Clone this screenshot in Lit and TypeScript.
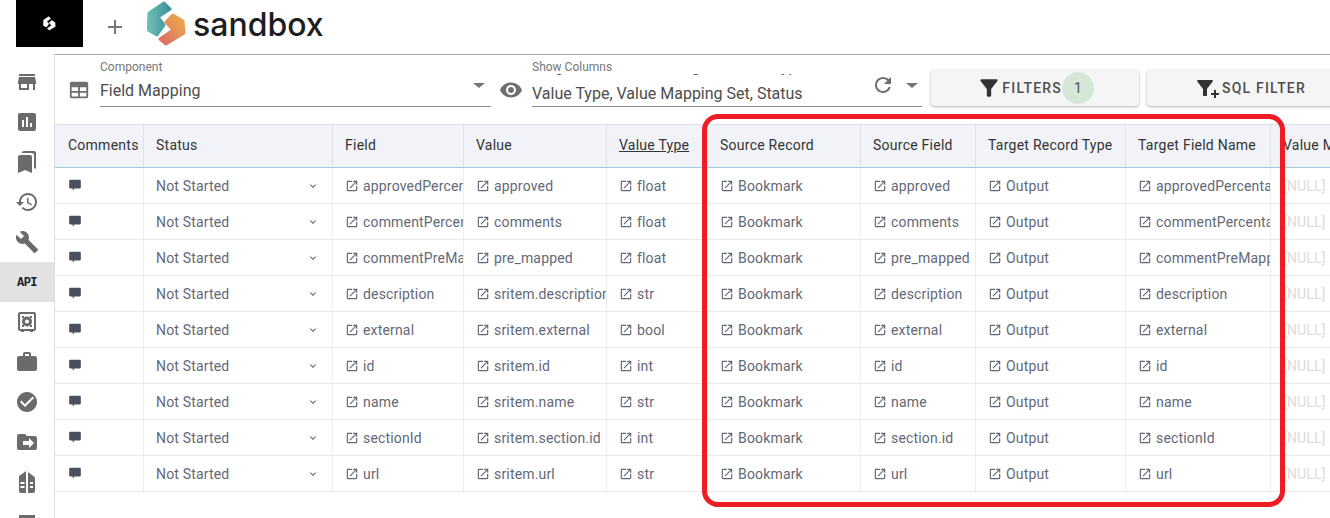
import { LitElement, html, css } from "lit";
import { customElement } from "lit/decorators.js";

const icon = (d: string, size = 24) =>
  html`<svg class="ic" width="${size}" height="${size}" viewBox="0 0 24 24" fill="currentColor"><path d="${d}"></path></svg>`;

const NAV = [
  "M20 4H4v2h16V4zm1 10v-2l-1-5H4l-1 5v2h1v6h10v-6h4v6h2v-6h1zm-9 4H6v-4h6v4z",
  "M19 3H5c-1.1 0-2 .9-2 2v14c0 1.1.9 2 2 2h14c1.1 0 2-.9 2-2V5c0-1.1-.9-2-2-2zM9 17H7v-7h2v7zm4 0h-2V7h2v10zm4 0h-2v-4h2v4z",
  "M19 18l2 1V3c0-1.1-.9-2-2-2H8.99C7.89 1 7 1.9 7 3h10c1.1 0 2 .9 2 2v13zM15 5H5c-1.1 0-2 .9-2 2v16l7-3 7 3V7c0-1.1-.9-2-2-2z",
  "M13 3c-4.97 0-9 4.03-9 9H1l3.89 3.89.07.14L9 12H6c0-3.87 3.13-7 7-7s7 3.13 7 7-3.13 7-7 7c-1.93 0-3.68-.79-4.94-2.06l-1.42 1.42C8.27 19.99 10.51 21 13 21c4.97 0 9-4.03 9-9s-4.03-9-9-9zm-1 5v5l4.28 2.54.72-1.21-3.5-2.08V8H12z",
  "M22.7 19l-9.1-9.1c.9-2.3.4-5-1.5-6.9-2-2-5-2.4-7.4-1.3L9 6 6 9 1.6 4.7C.4 7.1.9 10.1 2.9 12.1c1.9 1.9 4.6 2.4 6.9 1.5l9.1 9.1c.4.4 1 .4 1.4 0l2.3-2.3c.5-.4.5-1.1.1-1.4z",
  "API",
  "M5 2h14c1.1 0 2 .9 2 2v15c0 1.1-.9 2-2 2h-1v1h-3v-1H9v1H6v-1H5c-1.1 0-2-.9-2-2V4c0-1.1.9-2 2-2zm0 2v15h14V4H5zm7 2.5a5 5 0 1 1 0 10 5 5 0 0 1 0-10zm0 3a2 2 0 1 0 0 4 2 2 0 0 0 0-4zM7 6h2v2H7V6zm8 0h2v2h-2V6zM7 15h2v2H7v-2zm8 0h2v2h-2v-2z",
  "M20 6h-4V4c0-1.11-.89-2-2-2h-4c-1.11 0-2 .89-2 2v2H4c-1.11 0-1.99.89-1.99 2L2 19c0 1.11.89 2 2 2h16c1.11 0 2-.89 2-2V8c0-1.11-.89-2-2-2zm-6 0h-4V4h4v2z",
  "M12 2C6.48 2 2 6.48 2 12s4.48 10 10 10 10-4.48 10-10S17.52 2 12 2zm-2 15l-5-5 1.41-1.41L10 14.17l7.59-7.59L19 8l-9 9z",
  "M20 6h-8l-2-2H4c-1.11 0-1.99.89-1.99 2L2 18c0 1.11.89 2 2 2h16c1.11 0 2-.89 2-2V8c0-1.11-.89-2-2-2zm-6 12v-3H8v-4h6V8l5 5-5 5z",
  "M11 1v22H6c-1.1 0-2-.9-2-2V7c0-.8.5-1.500 1.200-1.800L11 1zM5.500 12v2h4v-2h-4zm0 4v2h4v-2h-4zM13 2l6 4.500c.6.4 1 1 1 1.700V21c0 1.100-.9 2-2 2h-5V2zm2 10v2h3v-2h-3zm0 4v2h3v-2h-3z",
  "M4 5h16v4H4z",
];

const LINK =
  "M19 19H5V5h7V3H5c-1.11 0-2 .9-2 2v14c0 1.1.89 2 2 2h14c1.1 0 2-.9 2-2v-7h-2v7zM14 3v2h3.59l-9.83 9.83 1.41 1.41L19 6.41V10h2V3h-7z";
const COMMENT =
  "M4 3h16c1.100 0 2 .9 2 2v11c0 1.100-.9 2-2 2h-9l-3 4v-4H4c-1.100 0-2-.9-2-2V5c0-1.100.9-2 2-2z";
const CHEVRON = "M16.590 8.590L12 13.170 7.410 8.590 6 10l6 6 6-6z";
const FUNNEL =
  "M4.25 5.61C6.27 8.2 10 13 10 13v6c0 .55.45 1 1 1h2c.55 0 1-.45 1-1v-6s3.72-4.8 5.74-7.39c.51-.66.04-1.61-.79-1.61H5.04c-.83 0-1.3.95-.79 1.61z";
const TABLE =
  "M4 3h16c1.100 0 2 .9 2 2v14c0 1.100-.9 2-2 2H4c-1.100 0-2-.9-2-2V5c0-1.100.9-2 2-2zm0 6v4h7V9H4zm9 0v4h7V9h-7zM4 15v4h7v-4H4zm9 0v4h7v-4h-7z";
const TEAL = "M2 12 17 2l6 6-12 8 6 8-7 10-9-5z";
const ORANGE = "M26 14l10 6 1 12-18 11-6-5 13-9-7-8z";

const HEADERS = [
  "Comments",
  "Status",
  "Field",
  "Value",
  "Value Type",
  "Source Record",
  "Source Field",
  "Target Record Type",
  "Target Field Name",
  "Value M",
];

const ROWS = [
  ["approvedPercentage", "approved", "float", "approved", "approvedPercentage"],
  ["commentPercentage", "comments", "float", "comments", "commentPercentage"],
  ["commentPreMapped", "pre_mapped", "float", "pre_mapped", "commentPreMapped"],
  ["description", "sritem.description", "str", "description", "description"],
  ["external", "sritem.external", "bool", "external", "external"],
  ["id", "sritem.id", "int", "id", "id"],
  ["name", "sritem.name", "str", "name", "name"],
  ["sectionId", "sritem.section.id", "int", "section.id", "sectionId"],
  ["url", "sritem.url", "str", "url", "url"],
];

@customElement("app-root")
export class AppRoot extends LitElement {
  static styles = css`
    :host {
      display: block;
      position: relative;
      width: 1330px;
      height: 518px;
      overflow: hidden;
      background: #fff;
      font-family: Roboto, "Liberation Sans", sans-serif;
      color: #444;
    }
    .ic {
      display: block;
      flex: none;
    }
    .top {
      display: flex;
      align-items: flex-start;
      height: 54px;
      padding-left: 16px;
      box-sizing: border-box;
    }
    .black {
      width: 67px;
      height: 47px;
      background: #000;
      display: flex;
      align-items: center;
      justify-content: center;
    }
    .plus {
      margin: 15px 0 0 20px;
      color: #757575;
    }
    .logo {
      margin: 1px 0 0 20px;
    }
    .brand {
      margin: 5px 0 0 7px;
      font: 500 32px/40px Inter, "Open Sans", sans-serif;
      color: #1d1d22;
    }
    .body {
      display: flex;
      height: 464px;
    }
    .side {
      width: 55px;
      flex: none;
      padding-top: 8px;
      box-sizing: border-box;
      border-right: 1px solid #ddd;
      color: #6b6b6b;
    }
    .nav {
      height: 40px;
      display: flex;
      align-items: center;
      justify-content: center;
    }
    .nav.active {
      background: #e2e2e2;
      color: #1c1c28;
      font: 700 12px/1 "Liberation Mono", monospace;
      letter-spacing: -0.5px;
      padding-top: 2px;
      box-sizing: border-box;
    }
    .main {
      flex: 1;
      min-width: 0;
      border-top: 1px solid #aaa;
    }
    .bar {
      height: 69px;
      display: flex;
      color: #6f6f6f;
    }
    .bar-ic {
      margin: 24px 0 0 13px;
    }
    .field {
      position: relative;
      width: 391px;
      height: 51px;
      margin-left: 10px;
      flex: none;
      border-bottom: 1px solid #8a8a8a;
    }
    .label {
      font-size: 12px;
      line-height: 14px;
      color: #777;
      height: 14px;
      position: relative;
      z-index: 1;
      background: #fff;
      margin-top: 5px;
    }
    .value {
      font-size: 16px;
      line-height: 22px;
      color: #4d4d4d;
      margin-top: 6px;
      white-space: nowrap;
    }
    .multi {
      height: 33px;
      margin-top: 0;
      line-height: 27px;
      overflow: hidden;
      display: flex;
      flex-direction: column;
      justify-content: flex-end;
    }
    .multi div {
      flex: none;
    }
    .arrow {
      position: absolute;
      right: 6px;
      top: 28px;
      width: 0;
      height: 0;
      border: 6px solid transparent;
      border-top: 5px solid #757575;
      border-bottom: 0;
    }
    .eye {
      margin: 23px 0 0 8px;
    }
    .field2 {
      margin-left: 9px;
      width: 390px;
    }
    .field2 .arrow {
      right: 4px;
    }
    .refresh {
      position: absolute;
      right: 27px;
      top: 18px;
    }
    .btn {
      height: 36px;
      margin: 15px 0 0 9px;
      width: 208px;
      flex: none;
      display: flex;
      align-items: center;
      justify-content: flex-end;
      gap: 2px;
      position: relative;
      box-sizing: border-box;
      padding-right: 49px;
      background: #f5f5f5;
      border-radius: 4px;
      box-shadow: 0 1px 3px rgba(0, 0, 0, 0.3);
      font-size: 14px;
      font-weight: 500;
      letter-spacing: 1.2px;
      color: #4d4d4d;
    }
    .btn + .btn {
      margin-left: 8px;
    }
    .btn .ic {
      color: #333;
    }
    .filters {
      padding-right: 77px;
      gap: 0;
    }
    .badge {
      position: absolute;
      left: 131px;
      top: 2px;
      width: 32px;
      height: 32px;
      border-radius: 50%;
      background: #d5e8d8;
      display: flex;
      align-items: center;
      justify-content: center;
      font-weight: 400;
      letter-spacing: 0;
    }
    .row {
      display: grid;
      grid-template-columns: 88px 189px 131px 143px 101px 153px 115px 150px 145px 100px;
      height: 36px;
      border-bottom: 1px solid #e9e9e9;
      box-sizing: border-box;
      font-size: 14px;
      letter-spacing: 0.17px;
      color: #636877;
    }
    .cell {
      display: flex;
      align-items: center;
      gap: 4px;
      padding-left: 12px;
      overflow: hidden;
      white-space: nowrap;
      border-left: 1px solid #eeeeee;
      box-sizing: border-box;
    }
    .cell:first-child {
      border-left: 0;
      padding-left: 13px;
    }
    .head {
      height: 44px;
      background: #f1f3f8;
      border-top: 1px solid #dde0e6;
      border-bottom: 1px solid #9ccbdf;
      color: #333;
      letter-spacing: 0.25px;
    }
    .head .cell {
      border-left-color: #dde0e6;
      padding-bottom: 2px;
    }
    .sorted {
      text-decoration: underline;
    }
    .status {
      justify-content: space-between;
      padding-right: 13px;
    }
    .status .ic {
      color: #666;
    }
    .link .ic {
      color: #636877;
    }
    .note .ic {
      color: #4a4f5e;
      margin-bottom: 2px;
    }
    .null {
      color: #dcdcdc;
    }
    .mark {
      position: absolute;
      left: 702px;
      top: 114px;
      width: 583px;
      height: 393px;
      box-sizing: border-box;
      border: 5px solid #ee1c25;
      border-radius: 16px;
      pointer-events: none;
    }
  `;

  linkCell(text: string) {
    return html`<div class="cell link">${icon(LINK, 14)}${text}</div>`;
  }

  renderLogo() {
    return html`<svg class="logo" width="39" height="46" viewBox="0 0 39 46">
      <defs>
        <linearGradient id="teal" x1="0" y1="0" x2="1" y2="0">
          <stop offset="0" stop-color="#6dbfb4"></stop>
          <stop offset="1" stop-color="#3d8f9a"></stop>
        </linearGradient>
        <linearGradient id="orange" x1="0" y1="1" x2="1" y2="0">
          <stop offset="0" stop-color="#dc6a6a"></stop>
          <stop offset="1" stop-color="#ecae4a"></stop>
        </linearGradient>
      </defs>
      <path fill="url(#teal)" stroke="url(#teal)" stroke-width="3" stroke-linejoin="round" d="${TEAL}"></path>
      <path fill="url(#orange)" stroke="url(#orange)" stroke-width="3" stroke-linejoin="round" d="${ORANGE}"></path>
    </svg>`;
  }

  render() {
    return html`
      <div class="top">
        <div class="black">
          <svg width="13" height="15" viewBox="0 0 39 46" fill="#fff" stroke="#fff" stroke-width="2" stroke-linejoin="round">
            <path d="${TEAL}"></path>
            <path d="${ORANGE}"></path>
          </svg>
        </div>
        <div class="plus">${icon("M19 13h-6v6h-2v-6H5v-2h6V5h2v6h6v2z", 24)}</div>
        ${this.renderLogo()}
        <div class="brand">sandbox</div>
      </div>
      <div class="body">
        <div class="side">
          ${NAV.map((d) =>
            d === "API"
              ? html`<div class="nav active">API</div>`
              : html`<div class="nav">${icon(d, 24)}</div>`,
          )}
        </div>
        <div class="main">
          <div class="bar">
            <div class="bar-ic">${icon(TABLE, 22)}</div>
            <div class="field">
              <div class="label">Component</div>
              <div class="value">Field Mapping</div>
              <div class="arrow"></div>
            </div>
            <div class="eye">
              ${icon(
                "M12 4.500C7 4.500 2.730 7.610 1 12c1.730 4.390 6 7.500 11 7.500s9.270-3.110 11-7.500c-1.730-4.390-6-7.500-11-7.500zM12 17c-2.760 0-5-2.240-5-5s2.240-5 5-5 5 2.240 5 5-2.240 5-5 5zm0-8c-1.660 0-3 1.340-3 3s1.340 3 3 3 3-1.340 3-3-1.340-3-3-3z",
                24,
              )}
            </div>
            <div class="field field2">
              <div class="label">Show Columns</div>
              <div class="value multi">
                <div>Target Field Name, Target Record Type, Field, Value,</div>
                <div>Value Type, Value Mapping Set, Status</div>
              </div>
              <div class="refresh">
                ${icon(
                  "M17.650 6.350C16.200 4.900 14.210 4 12 4c-4.420 0-7.990 3.580-7.990 8s3.570 8 7.990 8c3.730 0 6.840-2.550 7.730-6h-2.080c-.82 2.330-3.040 4-5.650 4-3.310 0-6-2.690-6-6s2.690-6 6-6c1.660 0 3.140.69 4.220 1.780L13 11h7V4l-2.350 2.350z",
                  24,
                )}
              </div>
              <div class="arrow"></div>
            </div>
            <div class="btn filters">
              ${icon(FUNNEL, 26)} FILTERS
              <div class="badge">1</div>
            </div>
            <div class="btn">
              <svg class="ic" width="27" height="24" viewBox="0 0 27 24" fill="currentColor">
                <path d="${FUNNEL}"></path>
                <path d="M21 14h2v3h3v2h-3v3h-2v-3h-3v-2h3z"></path>
              </svg>
              SQL FILTER
            </div>
          </div>
          <div class="row head">
            ${HEADERS.map(
              (h) =>
                html`<div class="cell">
                  <span class="${h === "Value Type" ? "sorted" : ""}">${h}</span>
                </div>`,
            )}
          </div>
          ${ROWS.map(
            ([field, value, type, source, target]) => html`
              <div class="row">
                <div class="cell note">${icon(COMMENT, 14)}</div>
                <div class="cell status">Not Started ${icon(CHEVRON, 12)}</div>
                ${this.linkCell(field)} ${this.linkCell(value)}
                ${this.linkCell(type)} ${this.linkCell("Bookmark")}
                ${this.linkCell(source)} ${this.linkCell("Output")}
                ${this.linkCell(target)}
                <div class="cell null">[NULL]</div>
              </div>
            `,
          )}
        </div>
      </div>
      <div class="mark"></div>
    `;
  }
}
